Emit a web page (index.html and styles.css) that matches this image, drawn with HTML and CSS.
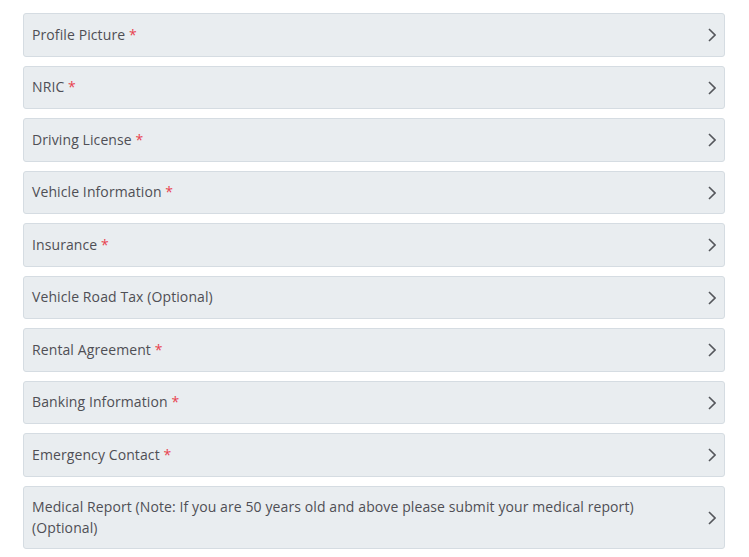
FILE: index.html
```html
<!DOCTYPE html>
<html>
<head>
<meta charset="utf-8">
<link rel="stylesheet" href="styles.css">
</head>
<body>
<div class="list">
  <div class="row"><span class="label">Profile Picture <span class="req">*</span></span><svg class="chev" viewBox="0 0 8 14"><path d="M1 1l6 6-6 6"/></svg></div>
  <div class="row"><span class="label">NRIC <span class="req">*</span></span><svg class="chev" viewBox="0 0 8 14"><path d="M1 1l6 6-6 6"/></svg></div>
  <div class="row"><span class="label">Driving License <span class="req">*</span></span><svg class="chev" viewBox="0 0 8 14"><path d="M1 1l6 6-6 6"/></svg></div>
  <div class="row"><span class="label">Vehicle Information <span class="req">*</span></span><svg class="chev" viewBox="0 0 8 14"><path d="M1 1l6 6-6 6"/></svg></div>
  <div class="row"><span class="label">Insurance <span class="req">*</span></span><svg class="chev" viewBox="0 0 8 14"><path d="M1 1l6 6-6 6"/></svg></div>
  <div class="row"><span class="label">Vehicle Road Tax (Optional)</span><svg class="chev" viewBox="0 0 8 14"><path d="M1 1l6 6-6 6"/></svg></div>
  <div class="row"><span class="label">Rental Agreement <span class="req">*</span></span><svg class="chev" viewBox="0 0 8 14"><path d="M1 1l6 6-6 6"/></svg></div>
  <div class="row"><span class="label">Banking Information <span class="req">*</span></span><svg class="chev" viewBox="0 0 8 14"><path d="M1 1l6 6-6 6"/></svg></div>
  <div class="row"><span class="label">Emergency Contact <span class="req">*</span></span><svg class="chev" viewBox="0 0 8 14"><path d="M1 1l6 6-6 6"/></svg></div>
  <div class="row tall"><span class="label">Medical Report (Note: If you are 50 years old and above please submit your medical report)<br>(Optional)</span><svg class="chev" viewBox="0 0 8 14"><path d="M1 1l6 6-6 6"/></svg></div>
</div>
</body>
</html>
```
FILE: styles.css
```css
html, body {
  margin: 0;
  padding: 0;
  background: #ffffff;
}
body {
  font-family: "Open Sans", "Noto Sans", sans-serif;
  font-size: 14px;
  color: #4f4f55;
}
.list {
  display: flex;
  flex-direction: column;
  gap: 9px;
  padding: 13.3px 24px 0 23px;
}
.row {
  box-sizing: border-box;
  height: 43.5px;
  display: flex;
  align-items: center;
  justify-content: space-between;
  padding: 0 8px 2px 8px;
  background: #e9edf0;
  border: 1px solid #d5dce2;
  border-radius: 3px;
}
.row.tall {
  height: 63.5px;
}
.label {
  line-height: 21px;
  letter-spacing: 0.1px;
}
.req {
  color: #e8424f;
}
.chev {
  width: 8px;
  height: 14px;
  margin-top: 2px;
  fill: none;
  stroke: #55575c;
  stroke-width: 1.6;
}
```
